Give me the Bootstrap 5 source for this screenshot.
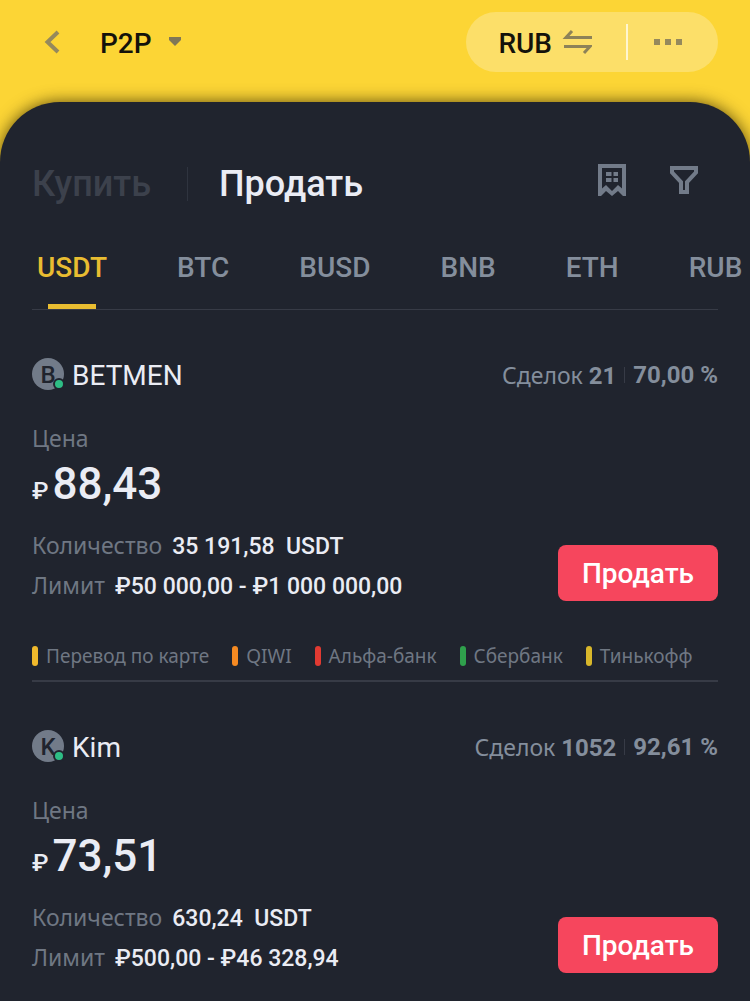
<!DOCTYPE html>
<html lang="ru">
<head>
<meta charset="utf-8">
<meta name="viewport" content="width=device-width, initial-scale=1">
<title>P2P</title>
<link href="https://cdn.jsdelivr.net/npm/bootstrap@5.3.0/dist/css/bootstrap.min.css" rel="stylesheet">
<style>
  :root { --ink: #20242e; --gold: #fcd535; --muted: #848e9c; --dim: #6f7783; --light: #eaecf4; --rule: #373b46; }
  body { background: var(--gold); font-family: Roboto, "Noto Sans", sans-serif; color: var(--light); overflow-x: hidden; }
  .btn-plain { background: none; border: 0; padding: 0; line-height: 32px; }
  svg { display: block; }
  .topbar { padding: 12px 32px 30px 44px; }
  .topbar .btn-plain { color: #14120b; font-size: 28px; font-weight: 500; padding-top: 3px; }
  .topbar .btn-glyph { padding-top: 0; }
  .section-switch { margin-left: 40px; }
  .pill { background: #fcdf69; border-radius: 30px; height: 60px; padding: 0 35px 0 32px; }
  .pill-rule { width: 2px; height: 36px; background: #fff6cf; margin: 0 25px 0 34px; }
  .sheet { background: var(--ink); border-radius: 60px 60px 0 0; box-shadow: 0 0 16px rgba(40, 30, 0, .75); padding: 0 32px; }
  .sides { padding-top: 60px; }
  .sides .btn-plain { font-size: 36px; line-height: 44px; font-weight: 500; color: var(--light); }
  .sides .side-off { color: #3c414c; }
  .side-rule { width: 1px; height: 34px; background: #2f343f; margin: 0 31px 0 36px; }
  .tools { gap: 44px; padding: 0 20px 8px 0; }
  .coins { border-bottom: 1px solid var(--rule); padding: 42px 0 0 5px; gap: 70px; white-space: nowrap; }
  .coins a { font-size: 28px; font-weight: 500; line-height: 40px; height: 61px; color: var(--muted); text-decoration: none; }
  .coins a.current { color: #e9bd31; display: flex; flex-direction: column; align-items: center; justify-content: space-between; }
  .coins a.current::after { content: ""; width: 48px; height: 5px; background: #e9bd31; }
  .offer { padding: 48px 0 12px; }
  .offer + .offer { border-top: 2px solid var(--rule); }
  .avatar { width: 32px; height: 32px; border-radius: 50%; background: #727b89; color: var(--ink); font-size: 24px; font-weight: 500; line-height: 34px; }
  .online { width: 12px; height: 12px; right: -1px; bottom: 0; border-radius: 50%; border: 2px solid var(--ink); background: #2ebd85; }
  .nick { font-size: 28px; line-height: 32px; padding-top: 2px; }
  .stats { font-size: 24px; line-height: 32px; color: var(--muted); }
  .stat-rule { width: 1px; height: 16px; background: var(--rule); }
  .wide { font-family: "Noto Sans", sans-serif; font-weight: 400; }
  .stats .wide { font-size: 23px; }
  .caption { font-size: 23px; line-height: 32px; color: var(--dim); margin-top: 30px; }
  .price { font-size: 44px; line-height: 60px; font-weight: 500; gap: 4px; }
  .price span { font-size: 24px; }
  .facts { font-size: 23px; line-height: 40px; font-weight: 500; margin-top: 4px; }
  .facts div { gap: 10px; height: 40px; }
  .facts dt { color: var(--dim); }
  .btn-sell { background: #f6465d; color: #fff; width: 160px; height: 56px; border-radius: 8px; font-size: 28px; font-weight: 500; padding: 2px 0 0; }
  .ways { font-size: 19px; line-height: 24px; color: var(--dim); margin-top: 39px; gap: 23px; white-space: nowrap; }
  .ways li::before { content: ""; width: 6px; height: 20px; border-radius: 3px; background: var(--way); }
  .way-card { --way: #f0b92c; } .way-qiwi { --way: #f58a22; } .way-alfa { --way: #e13a32; } .way-sber { --way: #2fa04c; } .way-tin { --way: #d8b72b; }
</style>
</head>
<body class="min-vh-100 d-flex flex-column">
<header class="topbar d-flex align-items-center justify-content-between">
  <div class="d-flex align-items-center">
    <button class="btn-plain btn-glyph" type="button" aria-label="Назад"><svg width="16" height="24" viewBox="0 0 16 24" fill="none" stroke="#95895c" stroke-width="4"><path d="M14 2 3.500 12 14 22"/></svg></button>
    <button class="btn-plain section-switch d-flex align-items-center" type="button">P2P
      <svg class="ms-3 mb-1" width="14" height="9" viewBox="0 0 14 9" fill="#7f7757"><path d="M1 0h12v3L7 9 1 3z"/></svg></button>
  </div>
  <div class="pill d-flex align-items-center">
    <button class="btn-plain d-flex align-items-center" type="button">RUB
      <svg class="ms-2 mb-1" width="32" height="26" viewBox="0 0 32 26" fill="none" stroke="#8d8258" stroke-width="3"><path d="M32 8.500H6L12 2M4 17.500h26L24 24"/></svg></button>
    <span class="pill-rule"></span>
    <button class="btn-plain btn-glyph" type="button" aria-label="Ещё"><svg width="30" height="6" viewBox="0 0 30 6" fill="#95895c"><path d="M1 0h6v6H1zM12 0h6v6h-6zM23 0h6v6h-6z"/></svg></button>
  </div>
</header>
<main class="sheet flex-grow-1">
  <div class="sides d-flex align-items-center">
    <button class="btn-plain side-off" type="button">Купить</button>
    <span class="side-rule"></span>
    <button class="btn-plain" type="button">Продать</button>
    <div class="tools d-flex align-items-center ms-auto">
      <button class="btn-plain" type="button" aria-label="Заказы"><svg width="28" height="32" viewBox="0 0 28 32" fill="#727b89"><path fill-rule="evenodd" d="M0 0h28v32h-3l-5-5-6 5-6-5-5 5H0zM4 4v20.500l4-3.500 6 6 6-6 4 3.500V4z"/><path d="M8 8h5.500v4H8zM15.500 8H20v4h-4.500zM8 14h5.500v4H8zM15.500 14H20v4h-4.500z"/></svg></button>
      <button class="btn-plain" type="button" aria-label="Фильтр"><svg width="28" height="28" viewBox="0 0 28 28" fill="none" stroke="#727b89" stroke-width="4"><path d="M2 2h24v4.500L17 16v10h-6V16L2 6.500z"/></svg></button>
    </div>
  </div>
  <nav class="coins d-flex">
    <a href="#" class="current">USDT</a><a href="#">BTC</a><a href="#">BUSD</a><a href="#">BNB</a><a href="#">ETH</a><a href="#">RUB</a>
  </nav>

  <article class="offer">
    <div class="d-flex align-items-center justify-content-between">
      <div class="d-flex gap-2">
        <span class="avatar position-relative text-center">B<i class="online position-absolute"></i></span>
        <span class="nick">BETMEN</span>
      </div>
      <div class="stats d-flex align-items-center gap-2"><span><span class="wide">Сделок</span> <b>21</b></span><span class="stat-rule"></span><b>70,00 %</b></div>
    </div>
    <div class="caption wide">Цена</div>
    <div class="price d-flex align-items-baseline"><span>₽</span>88,43</div>
    <div class="d-flex justify-content-between align-items-end">
      <dl class="facts mb-0">
        <div class="d-flex align-items-baseline"><dt class="wide">Количество</dt><dd class="mb-0">35 191,58 &nbsp;USDT</dd></div>
        <div class="d-flex align-items-baseline"><dt class="wide">Лимит</dt><dd class="mb-0">₽50 000,00 - ₽1 000 000,00</dd></div>
      </dl>
      <button class="btn btn-sell mb-1" type="button">Продать</button>
    </div>
    <ul class="ways wide list-unstyled d-flex mb-0">
      <li class="way-card d-flex align-items-center gap-2">Перевод по карте</li>
      <li class="way-qiwi d-flex align-items-center gap-2">QIWI</li>
      <li class="way-alfa d-flex align-items-center gap-2">Альфа-банк</li>
      <li class="way-sber d-flex align-items-center gap-2">Сбербанк</li>
      <li class="way-tin d-flex align-items-center gap-2">Тинькофф</li>
    </ul>
  </article>

  <article class="offer">
    <div class="d-flex align-items-center justify-content-between">
      <div class="d-flex gap-2">
        <span class="avatar position-relative text-center">K<i class="online position-absolute"></i></span>
        <span class="nick">Kim</span>
      </div>
      <div class="stats d-flex align-items-center gap-2"><span><span class="wide">Сделок</span> <b>1052</b></span><span class="stat-rule"></span><b>92,61 %</b></div>
    </div>
    <div class="caption wide">Цена</div>
    <div class="price d-flex align-items-baseline"><span>₽</span>73,51</div>
    <div class="d-flex justify-content-between align-items-end">
      <dl class="facts mb-0">
        <div class="d-flex align-items-baseline"><dt class="wide">Количество</dt><dd class="mb-0">630,24 &nbsp;USDT</dd></div>
        <div class="d-flex align-items-baseline"><dt class="wide">Лимит</dt><dd class="mb-0">₽500,00 - ₽46 328,94</dd></div>
      </dl>
      <button class="btn btn-sell mb-1" type="button">Продать</button>
    </div>
  </article>
</main>
<script src="https://cdn.jsdelivr.net/npm/bootstrap@5.3.0/dist/js/bootstrap.bundle.min.js"></script>
</body>
</html>
